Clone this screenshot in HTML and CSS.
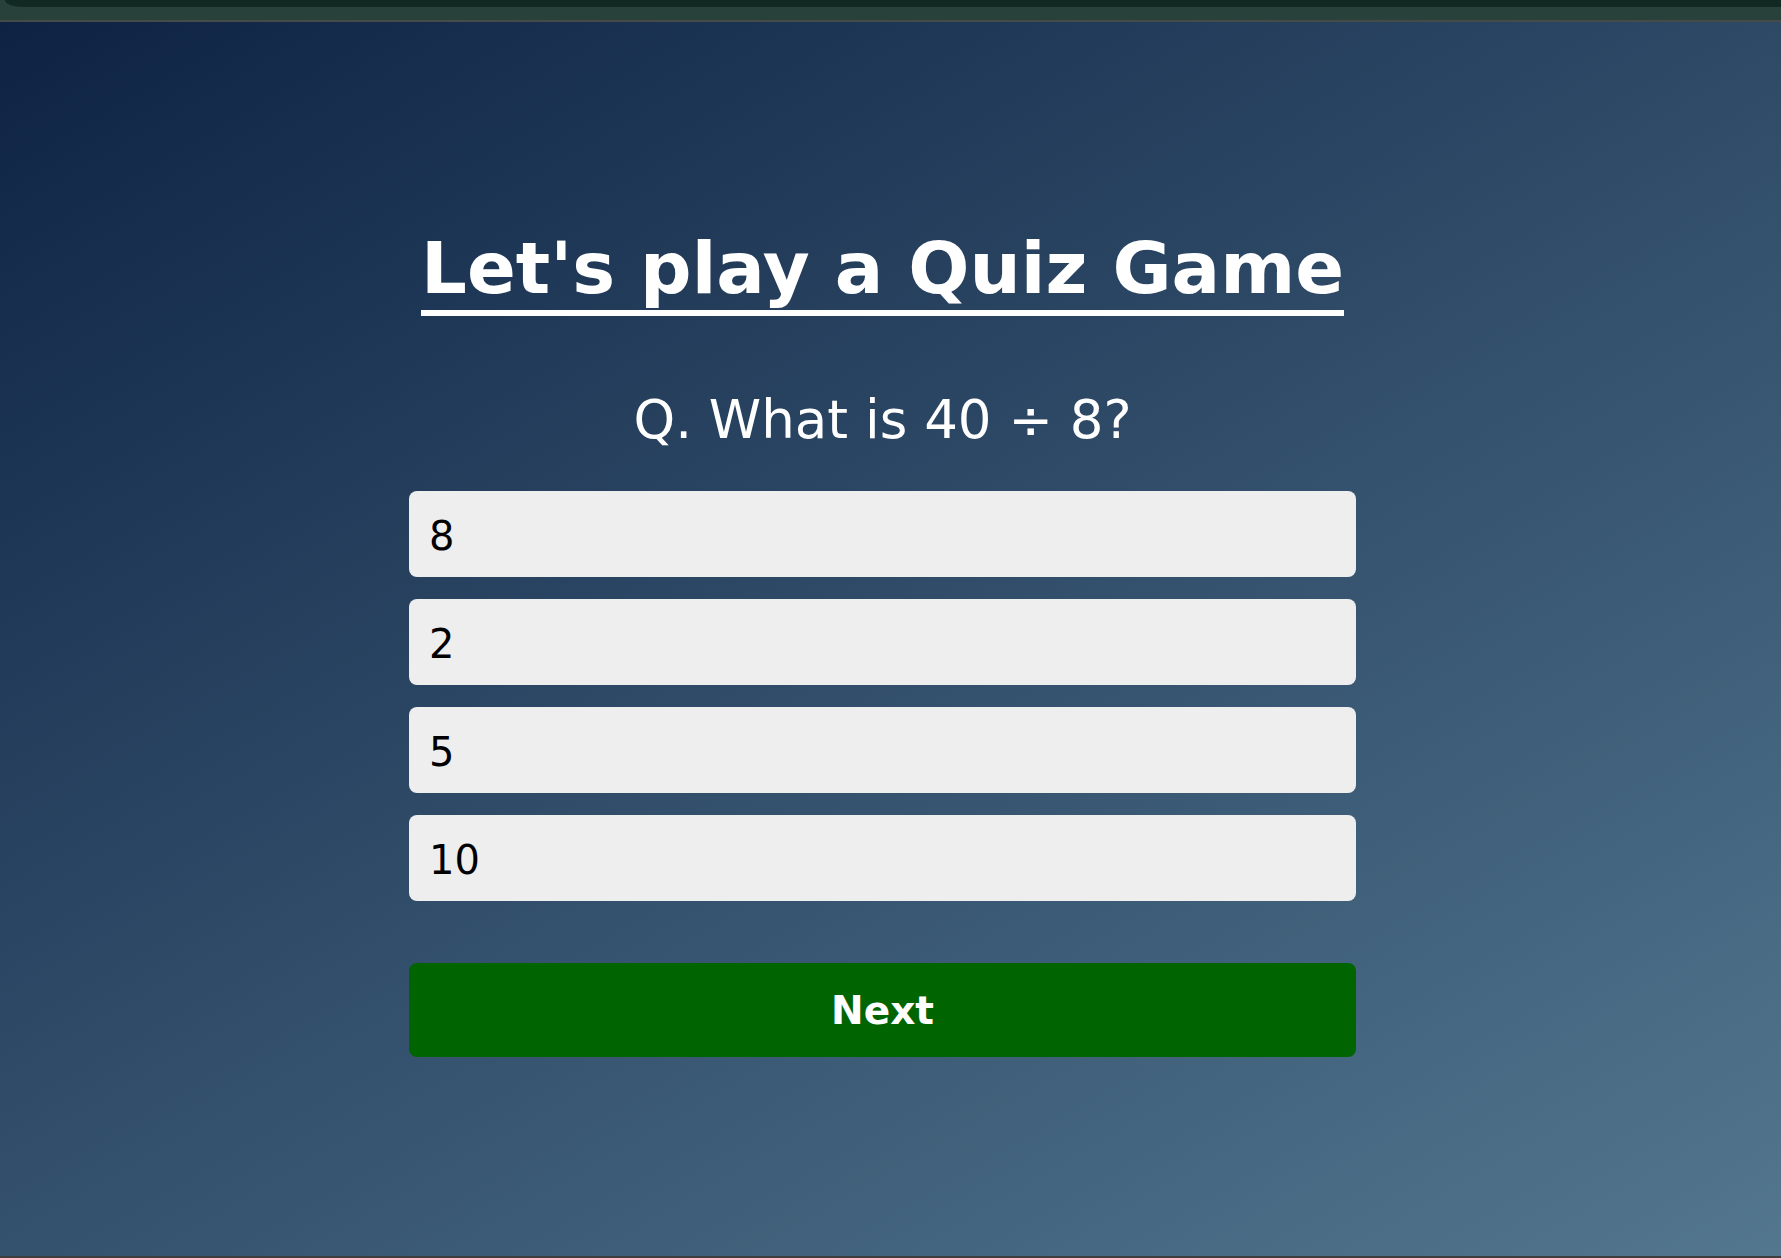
FILE: index.html
```html
<!DOCTYPE html>
<html lang="en">
<head>
<meta charset="utf-8">
<title>Quiz Game</title>
<link rel="stylesheet" href="styles.css">
</head>
<body>
<div class="chrome"><div class="chrome-bar"></div></div>
<main class="stage">
  <div class="quiz">
    <h1 class="title">Let's play a Quiz Game</h1>
    <h2 class="question">Q. What is 40 ÷ 8?</h2>
    <div class="answers">
      <button class="answer">8</button>
      <button class="answer">2</button>
      <button class="answer">5</button>
      <button class="answer">10</button>
    </div>
    <button class="next">Next</button>
  </div>
</main>
<div class="bottom-line"></div>
</body>
</html>
```

FILE: styles.css
```css
* { box-sizing: border-box; }
html, body { margin: 0; padding: 0; }
body {
  font-family: "DejaVu Sans", Verdana, sans-serif;
  background: #3e3e3e;
  width: 1781px;
  height: 1258px;
  overflow: hidden;
}
.chrome {
  height: 22px;
  background: #28413a;
  border-bottom: 2px solid #464a48;
}
.chrome-bar {
  height: 7px;
  margin-left: 5px;
  background: #112823;
  border-bottom-left-radius: 18px 7px;
}
.stage {
  height: 1234px;
  background: linear-gradient(150deg, #0e2344 0%, #53778f 100%);
  display: flex;
  justify-content: center;
  padding-right: 16px;
}
.quiz {
  width: 947px;
  display: flex;
  flex-direction: column;
  align-items: stretch;
}
.title {
  margin: 204px 0 0;
  font-size: 72px;
  line-height: 84px;
  font-weight: bold;
  color: #fff;
  text-align: center;
  text-decoration: underline;
  text-decoration-thickness: 6px;
  text-underline-offset: 17px;
  text-decoration-skip-ink: none;
}
.question {
  margin: 79px 0 0;
  font-size: 53px;
  line-height: 62px;
  font-weight: normal;
  color: #fff;
  text-align: center;
}
.answers {
  margin-top: 40px;
  display: flex;
  flex-direction: column;
  gap: 22px;
}
.answer {
  display: block;
  width: 100%;
  height: 86px;
  padding: 22px 20px 18px;
  border: none;
  border-radius: 8px;
  background: #eeeeee;
  color: #000;
  font-family: inherit;
  font-size: 40px;
  line-height: 46px;
  text-align: left;
}
.next {
  margin-top: 62px;
  height: 94px;
  padding-top: 2px;
  border: none;
  border-radius: 8px;
  background: #006400;
  color: #fff;
  font-family: inherit;
  font-size: 39px;
  font-weight: bold;
  text-align: center;
}
.bottom-line {
  height: 2px;
  background: #3e3e3e;
}
```
